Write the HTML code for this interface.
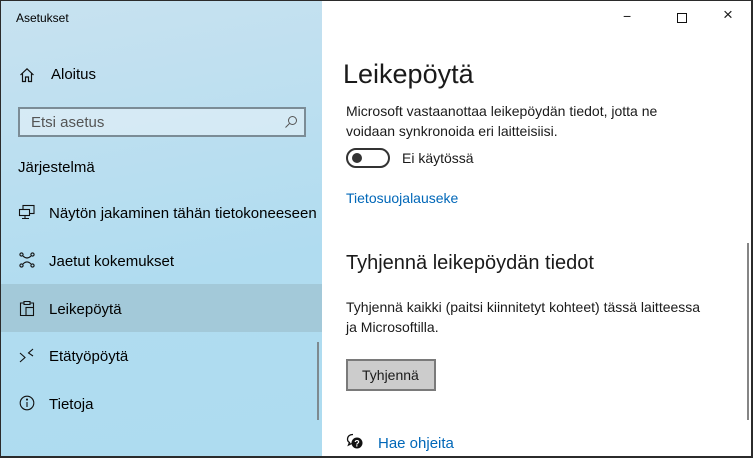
<!DOCTYPE html>
<html><head><meta charset="utf-8"><style>
*{margin:0;padding:0;box-sizing:border-box}
body{width:753px;height:458px;overflow:hidden;font-family:"Liberation Sans",sans-serif;background:#fff;position:relative}
.frame{position:absolute;inset:0;border:1px solid #2b2b2b;border-right-width:2px;border-bottom-width:2px;z-index:10;pointer-events:none}
.left{position:absolute;left:0;top:0;width:322px;height:458px;background:linear-gradient(170deg,#c8e2f0 0%,#bcdff0 30%,#b0dcf0 60%,#aedcf0 100%)}
.t{position:absolute;white-space:nowrap;color:#000}
.nav{position:absolute;left:0;width:322px;height:48px}
.sel{background:#a3c9d9}
.right .t{color:#1a1a1a}
</style></head><body>
<div class="left">
<div class="t" style="left:16px;top:11px;font-size:12px">Asetukset</div>
<svg style="position:absolute;left:19px;top:67px" width="16" height="16" viewBox="0 0 16 16" fill="none" stroke="#111" stroke-width="1.2"><path d="M1.5 8 L8 1.8 L14.5 8 M3.5 6.5 V14.5 H6.5 V10 H9.5 V14.5 H12.5 V6.5"/></svg>
<div class="t" style="left:51px;top:66px;font-size:15px">Aloitus</div>
<div style="position:absolute;left:18px;top:107px;width:288px;height:30px;border:2px solid #7b8c96;background:rgba(230,242,248,.6)"></div>
<div class="t" style="left:31px;top:114px;font-size:15px;color:#555">Etsi asetus</div>
<svg style="position:absolute;left:284px;top:115px" width="14" height="14" viewBox="0 0 14 14" fill="none" stroke="#555" stroke-width="1"><circle cx="8.5" cy="5.5" r="4"/><path d="M5.5 8.5 L1.5 12.5"/></svg>
<div class="t" style="left:18px;top:159px;font-size:15px">Järjestelmä</div>
<svg style="position:absolute;left:18px;top:204px" width="18" height="16" viewBox="0 0 18 16" fill="none" stroke="#111" stroke-width="1.1"><rect x="5" y="1.5" width="11" height="8"/><rect x="1.5" y="5.5" width="10" height="6" fill="#bde0f0"/><path d="M4 14.5 H11 M7 11.5 V14.5"/></svg>
<div class="t" style="left:49px;top:205px;font-size:15px">Näytön jakaminen tähän tietokoneeseen</div>
<svg style="position:absolute;left:19px;top:252px" width="16" height="16" viewBox="0 0 16 16" fill="none" stroke="#111" stroke-width="1.1"><circle cx="2.5" cy="2.5" r="1.6"/><circle cx="13.5" cy="2.5" r="1.6"/><circle cx="2.5" cy="13.5" r="1.6"/><circle cx="13.5" cy="13.5" r="1.6"/><path d="M4 4 Q8 8 12 4 M4 12 Q8 8 12 12"/></svg>
<div class="t" style="left:49px;top:253px;font-size:15px">Jaetut kokemukset</div>
<div class="nav sel" style="top:284px"></div>
<svg style="position:absolute;left:19px;top:300px" width="16" height="17" viewBox="0 0 16 17" fill="none" stroke="#111" stroke-width="1.1"><path d="M4.5 3 H1.5 V15.5 H7 M11.5 3 H14.5 V7 M5 4.5 V1.5 H11 V4.5 Z"/><rect x="7" y="7.5" width="7.5" height="8"/></svg>
<div class="t" style="left:49px;top:301px;font-size:15px">Leikepöytä</div>
<svg style="position:absolute;left:19px;top:348px" width="16" height="16" viewBox="0 0 16 16" fill="none" stroke="#111" stroke-width="1.1"><path d="M1 5 L6 9.5 L1 14 M14 1 L9.5 5 L14 8"/></svg>
<div class="t" style="left:49px;top:348px;font-size:15px">Etätyöpöytä</div>
<svg style="position:absolute;left:19px;top:395px" width="16" height="16" viewBox="0 0 16 16" fill="none" stroke="#111" stroke-width="1.1"><circle cx="8" cy="8" r="6.8"/><path d="M8 7 V12"/><circle cx="8" cy="4.6" r=".5" fill="#111"/></svg>
<div class="t" style="left:49px;top:396px;font-size:15px">Tietoja</div>
<div style="position:absolute;left:317px;top:342px;width:2px;height:78px;background:#7d8a90"></div>
</div>
<div class="right">
<div class="t" style="left:623px;top:8px;font-size:14px">&#8722;</div>
<div style="position:absolute;left:677px;top:13px;width:10px;height:10px;border:1px solid #111"></div>
<div class="t" style="left:723px;top:5px;font-size:17px">&#215;</div>
<div class="t" style="left:343px;top:59px;font-size:27px">Leikepöytä</div>
<div class="t" style="left:346px;top:101px;font-size:14px;line-height:20px">Microsoft vastaanottaa leikepöydän tiedot, jotta ne<br>voidaan synkronoida eri laitteisiisi.</div>
<div style="position:absolute;left:346px;top:148px;width:44px;height:20px;border:2px solid #333;border-radius:10px"></div>
<div style="position:absolute;left:352px;top:153px;width:10px;height:10px;border-radius:50%;background:#333"></div>
<div class="t" style="left:402px;top:150px;font-size:14px">Ei käytössä</div>
<div class="t" style="left:346px;top:190px;font-size:14px;color:#0067b8">Tietosuojalauseke</div>
<div class="t" style="left:346px;top:252px;font-size:20px">Tyhjennä leikepöydän tiedot</div>
<div class="t" style="left:346px;top:297px;font-size:14px;line-height:20px">Tyhjennä kaikki (paitsi kiinnitetyt kohteet) tässä laitteessa<br>ja Microsoftilla.</div>
<div style="position:absolute;left:346px;top:359px;width:90px;height:32px;border:2px solid #7a7a7a;background:#ccc"></div>
<div class="t" style="left:362px;top:367px;font-size:14px">Tyhjennä</div>
<svg style="position:absolute;left:346px;top:433px" width="18" height="18" viewBox="0 0 18 18"><path d="M7 1.5 C3 1.5 1.5 4 1.5 6 C1.5 8 2.5 9 3.5 9.5 L2.5 12 L5.5 10.5" fill="none" stroke="#111" stroke-width="1.3"/><circle cx="11" cy="10" r="5.5" fill="#111"/><text x="11" y="13.5" font-size="9" font-weight="bold" fill="#fff" text-anchor="middle" font-family="Liberation Sans">?</text></svg>
<div class="t" style="left:378px;top:435px;font-size:15px;color:#0067b8">Hae ohjeita</div>
<div style="position:absolute;left:747px;top:243px;width:2px;height:177px;background:#858585"></div>
</div>
<div class="frame"></div>
</body></html>
